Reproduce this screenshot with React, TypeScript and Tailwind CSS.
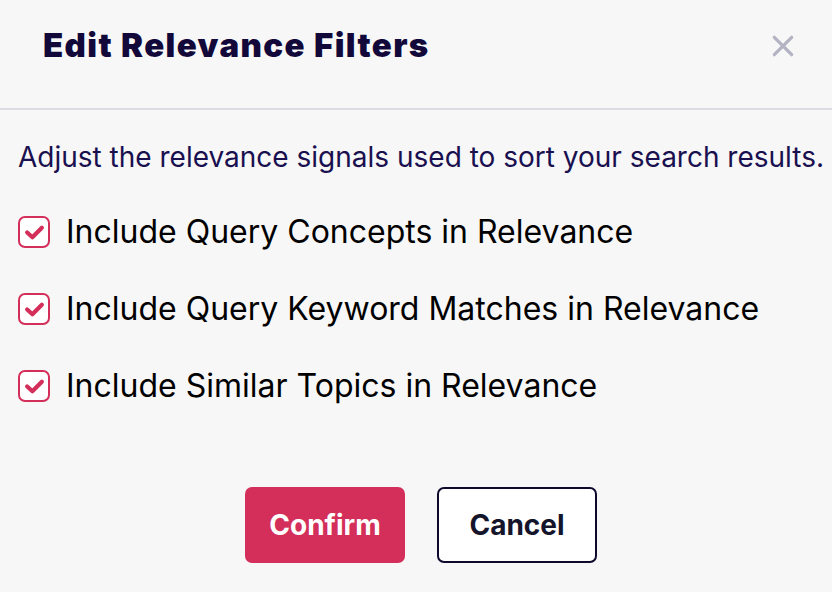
import { useState } from "react";

const filters = [
  "Include Query Concepts in Relevance",
  "Include Query Keyword Matches in Relevance",
  "Include Similar Topics in Relevance",
];

function CheckIcon() {
  return (
    <svg viewBox="0 0 20 20" className="w-[21px] h-[21px]" fill="none">
      <path
        d="M3 10l5 4.5 9-9"
        stroke="#d32f5a"
        strokeWidth="4"
        strokeLinecap="round"
        strokeLinejoin="round"
      />
    </svg>
  );
}

export default function App() {
  const [checked, setChecked] = useState([true, true, true]);

  return (
    <div
      className="w-[832px] h-[592px] bg-[#f7f7f7] flex flex-col overflow-hidden"
      style={{ fontFamily: "Inter, 'Noto Sans', sans-serif" }}
    >
      <div className="h-[110px] shrink-0 flex items-start justify-between pl-[43px] pr-[36px] pt-[24px] border-b-2 border-[#dcdce3]">
        <h1 className="text-[33px] leading-[42px] font-black text-[#12093a] tracking-[1.4px]">
          Edit Relevance Filters
        </h1>
        <button className="mt-[9px] text-[#b3b3c4]">
          <svg viewBox="0 0 24 24" className="w-[26px] h-[26px]" fill="none">
            <path
              d="M4 4L20 20M20 4L4 20"
              stroke="currentColor"
              strokeWidth="3"
              strokeLinecap="round"
            />
          </svg>
        </button>
      </div>

      <div className="flex flex-col pl-[18px] pt-[30px]">
        <p className="text-[28px] leading-[34px] text-[#1a1050]">
          Adjust the relevance signals used to sort your search results.
        </p>
        <div className="flex flex-col gap-[35px] mt-[37px]">
          {filters.map((f, i) => (
            <label key={f} className="flex items-center gap-[16px] cursor-pointer h-[42px]">
              <button
                onClick={() =>
                  setChecked(checked.map((c, j) => (j === i ? !c : c)))
                }
                className="w-[32px] h-[32px] rounded-[7px] border-2 border-[#d32f5a] bg-white flex items-center justify-center"
              >
                {checked[i] && <CheckIcon />}
              </button>
              <span className="text-[32px] leading-[42px] text-black">{f}</span>
            </label>
          ))}
        </div>
      </div>

      <div className="flex justify-center gap-[32px] mt-[80px] pl-[10px]">
        <button className="w-[160px] h-[76px] rounded-[7px] bg-[#d32f5a] text-white text-[28px] font-bold">
          Confirm
        </button>
        <button className="w-[160px] h-[76px] rounded-[7px] bg-white border-2 border-[#0d0a2c] text-[#14142b] text-[28px] font-bold">
          Cancel
        </button>
      </div>
    </div>
  );
}
